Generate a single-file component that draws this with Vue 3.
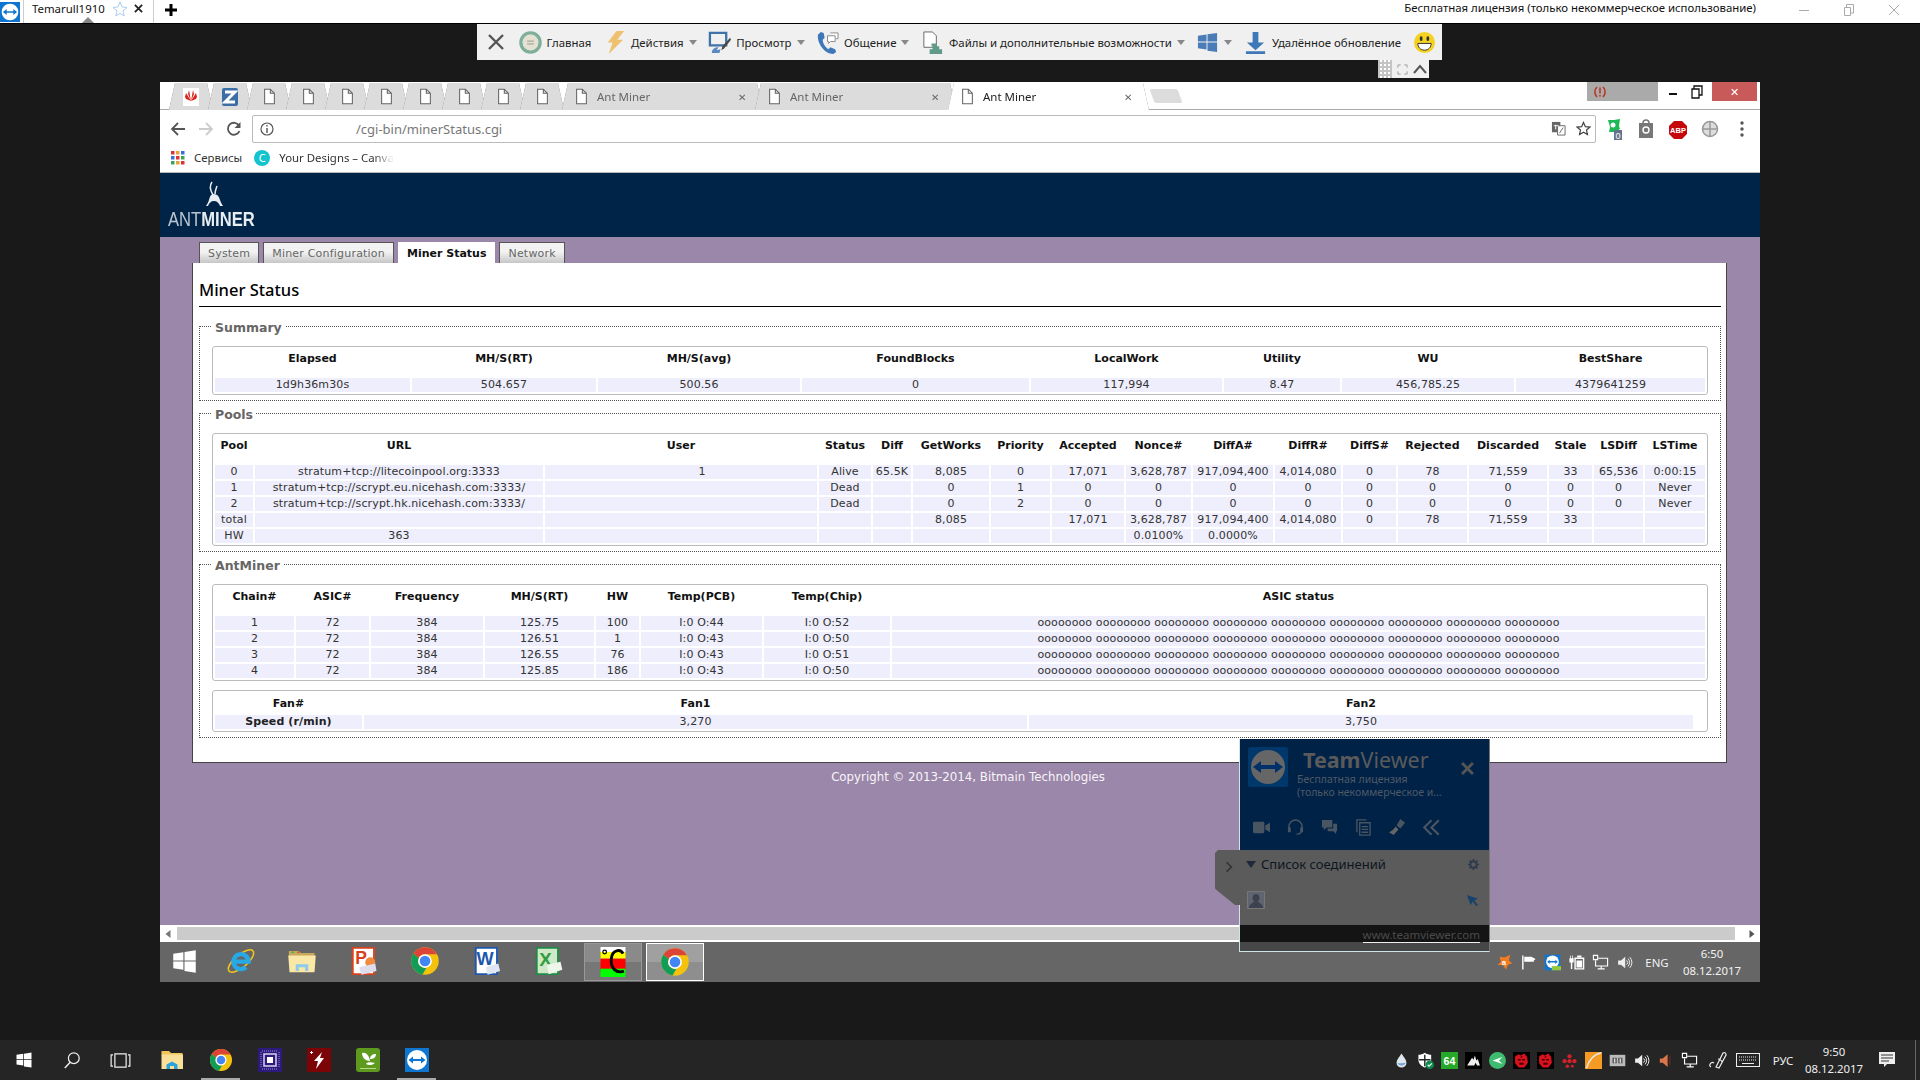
<script setup>
const summaryCols = [195, 184, 202, 227, 191, 116, 172, 189]
const summaryHead = ['Elapsed', 'MH/S(RT)', 'MH/S(avg)', 'FoundBlocks', 'LocalWork', 'Utility', 'WU', 'BestShare']
const summaryRow = ['1d9h36m30s', '504.657', '500.56', '0', '117,994', '8.47', '456,785.25', '4379641259']

const poolCols = [38, 288, 272, 52, 38, 76, 59, 72, 65, 80, 66, 53, 69, 78, 43, 49, 60]
const poolHead = ['Pool', 'URL', 'User', 'Status', 'Diff', 'GetWorks', 'Priority', 'Accepted', 'Nonce#', 'DiffA#', 'DiffR#', 'DiffS#', 'Rejected', 'Discarded', 'Stale', 'LSDiff', 'LSTime']
const poolRows = [
  ['0', 'stratum+tcp://litecoinpool.org:3333', '1', 'Alive', '65.5K', '8,085', '0', '17,071', '3,628,787', '917,094,400', '4,014,080', '0', '78', '71,559', '33', '65,536', '0:00:15'],
  ['1', 'stratum+tcp://scrypt.eu.nicehash.com:3333/', '', 'Dead', '', '0', '1', '0', '0', '0', '0', '0', '0', '0', '0', '0', 'Never'],
  ['2', 'stratum+tcp://scrypt.hk.nicehash.com:3333/', '', 'Dead', '', '0', '2', '0', '0', '0', '0', '0', '0', '0', '0', '0', 'Never'],
  ['total', '', '', '', '', '8,085', '', '17,071', '3,628,787', '917,094,400', '4,014,080', '0', '78', '71,559', '33', '', ''],
  ['HW', '363', '', '', '', '', '', '', '0.0100%', '0.0000%', '', '', '', '', '', '', '']
]

const asicStatus = Array(9).fill('oooooooo').join(' ')
const chainCols = [79, 73, 112, 109, 43, 121, 126, 813]
const chainHead = ['Chain#', 'ASIC#', 'Frequency', 'MH/S(RT)', 'HW', 'Temp(PCB)', 'Temp(Chip)', 'ASIC status']
const chainRows = [
  ['1', '72', '384', '125.75', '100', 'I:0 O:44', 'I:0 O:52', asicStatus],
  ['2', '72', '384', '126.51', '1', 'I:0 O:43', 'I:0 O:50', asicStatus],
  ['3', '72', '384', '126.55', '76', 'I:0 O:43', 'I:0 O:51', asicStatus],
  ['4', '72', '384', '125.85', '186', 'I:0 O:43', 'I:0 O:50', asicStatus]
]

const pinnedDocs = 8
const minerTabs = ['System', 'Miner Configuration', 'Miner Status', 'Network']
const remoteTools = [
  { icon: 'home', label: 'Главная' },
  { icon: 'bolt', label: 'Действия', caret: true },
  { icon: 'monitor', label: 'Просмотр', caret: true },
  { icon: 'phone', label: 'Общение', caret: true },
  { icon: 'files', label: 'Файлы и дополнительные возможности', caret: true },
  { icon: 'winblue', label: '', caret: true },
  { icon: 'download', label: 'Удалённое обновление' },
  { icon: 'smile', label: '' }
]
const innerApps = ['ie', 'folder', 'ppt', 'chrome', 'word', 'excel']
const innerTray = ['avast', 'flag', 'tvtray', 'battery', 'net', 'speaker']
const outerApps = ['folder2', 'chrome', 'cpuz', 'flash', 'splash', 'tv']
const outerTray = ['drop', 'shield', 'aida', 'corsair', 'send', 'devil', 'devil', 'dots', 'curve', 'grayb', 'speaker', 'mute', 'net']
const tvTools = ['video', 'headset', 'chat', 'tvdoc', 'brush', 'back']
</script>

<template>
  <div class="screen">
    <!-- symbols used by the taskbars and toolbars -->
    <svg class="defs" width="0" height="0">
      <defs>
        <symbol id="win" viewBox="0 0 24 24"><path fill="currentColor" d="M2 5l9-1.300V11H2zM12 3.500l10-1.500V11H12zM2 12h9v7.400L2 18zM12 12h10v10l-10-1.500z"/></symbol>
        <symbol id="winblue" viewBox="0 0 24 24"><path fill="#4a7cb8" d="M2 5l9-1.300V11H2zM12 3.500l10-1.500V11H12zM2 12h9v7.400L2 18zM12 12h10v10l-10-1.500z"/></symbol>
        <symbol id="chrome" viewBox="0 0 48 48">
          <circle cx="24" cy="24" r="22" fill="#f4c20d"/>
          <path fill="#db4437" d="M24 2a22 22 0 0 1 19 11H24a11 11 0 0 0-10 6.500L5.500 12A22 22 0 0 1 24 2z"/>
          <path fill="#0f9d58" d="M5.500 12L14 19.500A11 11 0 0 0 26 35L20 45.700A22 22 0 0 1 5.500 12z"/>
          <circle cx="24" cy="24" r="11" fill="#fff"/><circle cx="24" cy="24" r="8.500" fill="#4285f4"/>
        </symbol>
        <symbol id="ie" viewBox="0 0 48 48">
          <ellipse cx="24" cy="24" rx="25" ry="10" transform="rotate(-40 24 24)" fill="none" stroke="#f3c51f" stroke-width="2.500"/>
          <path fill="none" stroke="#26a9e6" stroke-width="7" d="M12 25h24a12 12 0 1 0-4 9"/>
        </symbol>
        <symbol id="folder" viewBox="0 0 48 48">
          <path fill="#c9a75b" d="M3 8h16l3 3h22v6H3z"/><path fill="#fbe7a6" d="M2 15h44l-2 27H4z"/>
          <path fill="#8ccbee" d="M14 40V29h20v11h-5v-6H19v6z"/><path fill="#c53" d="M16 9h4v2h-4z"/><path fill="#2b5" d="M7 9h4v2H7z"/>
        </symbol>
        <symbol id="folder2" viewBox="0 0 48 48">
          <path fill="#f2c55c" d="M3 6h15l4 4h23v4H3z"/><path fill="#fbe09a" d="M3 13h43v29H3z"/>
          <path fill="#2aa4dc" d="M13 42V33l11-6 11 6v9h-7v-6h-8v6z"/>
        </symbol>
        <symbol id="ppt" viewBox="0 0 48 48">
          <path fill="#fff" d="M5 2h36v44H5z"/><path fill="none" stroke="#d8411b" stroke-width="3" d="M6 3h34v42H6z"/>
          <text x="10" y="28" font-family="Liberation Sans" font-weight="700" font-size="28" fill="#d8411b">P</text>
          <circle cx="34" cy="26" r="8" fill="#f08a3c"/><path fill="#dde" d="M16 34l26-6 2 12-24 6z"/>
        </symbol>
        <symbol id="word" viewBox="0 0 48 48">
          <path fill="#fff" d="M5 2h36v44H5z"/><path fill="none" stroke="#1d57ad" stroke-width="3" d="M6 3h34v42H6z"/>
          <text x="7" y="30" font-family="Liberation Sans" font-weight="700" font-size="29" fill="#1d57ad">W</text>
          <path fill="#dde6f2" d="M22 34l20-6 3 12-20 6z"/>
        </symbol>
        <symbol id="excel" viewBox="0 0 48 48">
          <path fill="#cfe8c8" d="M5 2h36v44H5z"/><path fill="none" stroke="#1f8a45" stroke-width="3" d="M6 3h34v42H6z"/>
          <text x="10" y="32" font-family="Liberation Sans" font-weight="700" font-size="30" fill="#2f9e3f">X</text>
          <path fill="#eef5ea" d="M22 30l22-5 3 13-22 7z"/>
        </symbol>
        <symbol id="temp" viewBox="0 0 30 36">
          <path fill="#fff" d="M0 0h30v6H0z"/><path fill="#fbff00" d="M0 6h30v8H0z"/><path fill="#f00" d="M0 14h30v14H0z"/><path fill="#0f0" d="M0 26h30v10H0z"/>
          <path fill="none" stroke="#000" stroke-width="3.500" d="M27 8c-3-6-13-5-14 6-1 12 6 18 15 15"/>
          <circle cx="5" cy="6" r="2.200" fill="none" stroke="#000" stroke-width="1.500"/>
        </symbol>
        <symbol id="cpuz" viewBox="0 0 24 24">
          <path fill="#2d1a7d" d="M0 0h24v24H0z"/><rect x="6" y="6" width="12" height="12" fill="none" stroke="#cfc8ea" stroke-width="1.600"/>
          <path stroke="#9d92d2" stroke-dasharray="1 1" fill="none" d="M3 4v16M21 4v16M4 3h16M4 21h16"/><rect x="9" y="9" width="6" height="6" fill="#fff"/>
        </symbol>
        <symbol id="flash" viewBox="0 0 24 24"><path fill="#7c0407" d="M0 0h24v24H0z"/><path fill="#fff" d="M15 4L7 13h4l-2 8 8-11h-4zM4 3h1v1h1v1H5v1H4V5H3V4h1z"/></symbol>
        <symbol id="splash" viewBox="0 0 24 24"><rect width="24" height="24" rx="3" fill="#5d9a1e"/><path fill="#fff" d="M6 5c4-1 7 2 8 8-4 0-8-3-8-8zm8 6c0-3 2-5 6-5 0 3-2 5-6 5zm-4 5c1-2 5-2 9-1-2 2-6 3-9 1z"/><path fill="#b5d78a" d="M4 20h16v1H4z"/></symbol>
        <symbol id="tv" viewBox="0 0 24 24"><path fill="#0e76d1" d="M0 0h24v24H0z"/><circle cx="12" cy="12" r="10" fill="#fff"/><path fill="#0e76d1" d="M3.500 12L8 8.500V11h8V8.500l4.500 3.500L16 15.500V13H8v2.500z"/></symbol>
        <symbol id="tvtray" viewBox="0 0 24 24"><path fill="#0e76d1" d="M1 1h22v22H1z"/><circle cx="12" cy="11" r="9" fill="#fff"/><path fill="#0e76d1" d="M4.500 11L8 8v2h8V8l3.500 3L16 14v-2H8v2z"/><path fill="#96c93d" d="M11 17h13v6H11z"/></symbol>
        <symbol id="avast" viewBox="0 0 24 24"><path fill="#f47c20" d="M12 5l8-4-2 8 5 4-6 2-3 7-4-6-8-1 5-4-2-7z"/><text x="8" y="16" font-family="Liberation Sans" font-size="11" font-weight="700" fill="#fff">a</text></symbol>
        <symbol id="flag" viewBox="0 0 24 24"><path fill="#fff" d="M3 2h2v20H3zM6 4h10l6 3-3 3 1 1H6z"/></symbol>
        <symbol id="battery" viewBox="0 0 24 24"><path fill="none" stroke="#fff" stroke-width="2" d="M10 6h12v15H10z"/><path fill="#fff" d="M13 2h6v3h-6zM12 9h8v10h-8zM3 2h1v4H3zM6 2h1v4H6zM2 6h6v6H6v9H4v-9H2z"/></symbol>
        <symbol id="net" viewBox="0 0 24 24"><path fill="none" stroke="#fff" stroke-width="1.600" d="M2 2h6v6H2zM9 6h13v11H5V9M13 17v4M8 21h10"/></symbol>
        <symbol id="speaker" viewBox="0 0 24 24"><path fill="#eee" d="M3 9h4l6-5v16l-6-5H3z"/><path fill="none" stroke="#eee" stroke-width="1.400" d="M15 9a4 4 0 0 1 0 6M17 6.500a8 8 0 0 1 0 11M19.500 4.500a11 11 0 0 1 0 15"/></symbol>
        <symbol id="mute" viewBox="0 0 24 24"><path fill="#d9774a" d="M4 9h4l7-6v18l-7-6H4z"/><path fill="#5a2b1c" d="M17 6h2v12h-2z"/></symbol>
        <symbol id="drop" viewBox="0 0 24 24"><path fill="#dfe6ee" d="M12 2c3 5 7 9 7 13a7 7 0 0 1-14 0c0-4 4-8 7-13z"/><path fill="#7aa8d4" d="M6 15c4 2 8 0 12 0a6.500 6.500 0 0 1-12 0z"/></symbol>
        <symbol id="shield" viewBox="0 0 24 24"><path fill="#fff" d="M11 1c3 2 6 3 9 3v7c0 5-4 9-9 11-5-2-9-6-9-11V4c3 0 6-1 9-3z"/><path fill="#252525" d="M10 4h2v16h-2zM3 10h16v2H3z"/><circle cx="18" cy="18" r="6" fill="#0e8a4a"/><path fill="none" stroke="#fff" stroke-width="1.500" d="M15 18l2 2 4-4"/></symbol>
        <symbol id="aida" viewBox="0 0 24 24"><path fill="#26a828" d="M0 0h24v24H0z"/><text x="12" y="18" text-anchor="middle" font-family="Liberation Sans" font-size="15" font-weight="700" fill="#fff">64</text></symbol>
        <symbol id="corsair" viewBox="0 0 24 24"><path fill="#000" d="M0 0h24v24H0z"/><path fill="#eee" d="M3 19L10 8l2 3 2-6 2 7 2-2 3 9H17l-2-4-2 4z"/></symbol>
        <symbol id="send" viewBox="0 0 24 24"><circle cx="12" cy="12" r="12" fill="#3fbc6f"/><path fill="#fff" d="M5 12l14-5-5 5 5 5z"/></symbol>
        <symbol id="devil" viewBox="0 0 24 24"><path fill="#000" d="M0 0h24v24H0z"/><path fill="#d7121c" d="M3 6l5-3 3 2 5-3 4 5 1 8-5 7H8l-5-6z"/><path fill="#400" d="M7 10h4v2H7zM13 10h4v2h-4zM9 15h6v3H9zM11 6h2v2h-2z"/></symbol>
        <symbol id="dots" viewBox="0 0 24 24"><g fill="#d4202a"><circle cx="12" cy="6" r="3"/><circle cx="5" cy="13" r="3"/><circle cx="12" cy="13" r="3"/><circle cx="19" cy="13" r="3"/><circle cx="9" cy="20" r="2.500"/><circle cx="16" cy="20" r="2"/></g></symbol>
        <symbol id="curve" viewBox="0 0 24 24"><path fill="#f59a23" d="M0 0h24v24H0z"/><path fill="none" stroke="#e8e8e8" stroke-width="2" d="M2 23C6 10 12 3 23 1"/></symbol>
        <symbol id="grayb" viewBox="0 0 24 24"><rect x="1" y="4" width="22" height="16" fill="#bbb"/><path fill="#555" d="M5 8h6v8H5zM13 8h6v8h-6z"/><path fill="#ddd" d="M7 9h2v6H7zM15 9h2v6h-2z"/></symbol>
        <symbol id="home" viewBox="0 0 24 24"><circle cx="12" cy="12" r="10" fill="none" stroke="#7fae9a" stroke-width="3.500"/><circle cx="12" cy="12" r="8" fill="#e4e0d2"/><path stroke="#9a9a8c" d="M8.500 10.500h7M8.500 13.500h7"/></symbol>
        <symbol id="bolt" viewBox="0 0 24 24"><path fill="#efc06f" d="M14 0h8l-7 9h6L6 24l4-12H5z"/></symbol>
        <symbol id="monitor" viewBox="0 0 24 24"><path fill="none" stroke="#3f72a9" stroke-width="2.400" d="M2 2h17v13H2z"/><path fill="#5a88bd" d="M4 23c0-4 3-6 7-6l-2 3 4-1-1 4z"/><path fill="#4a4a4a" d="M23 7l1 2-7 9-3 2 1-4z"/></symbol>
        <symbol id="phone" viewBox="0 0 24 24"><path fill="#3e78b8" d="M5 1l3 1 1 5-2 2c0 4 3 8 6 10l2-2 5 2 1 3-3 2C9 24 1 13 2 4z"/><path fill="#fff" stroke="#888" d="M12 5h8v6h-5l-2 2v-2h-1zM15 2h8v6h-2"/></symbol>
        <symbol id="files" viewBox="0 0 24 24"><path fill="#fff" stroke="#666" d="M3 1h9l4 4v12H3z"/><path fill="#5f9a8a" d="M11 13h5v3h3v3h3v5H9v-5h3v-3h-1z"/></symbol>
        <symbol id="download" viewBox="0 0 24 24"><path fill="#3e78b8" d="M9 1h6v11h6l-9 8-9-8h6zM2 21h20v3H2z"/></symbol>
        <symbol id="smile" viewBox="0 0 24 24"><circle cx="12" cy="12" r="11" fill="#f4d21f"/><ellipse cx="8.500" cy="8" rx="1.500" ry="2.500" fill="#333"/><ellipse cx="15.500" cy="8" rx="1.500" ry="2.500" fill="#333"/><path fill="#fff" stroke="#333" d="M5 13h14c0 4-3 7-7 7s-7-3-7-7z"/></symbol>
        <symbol id="doc" viewBox="0 0 16 20"><path fill="#fff" stroke="#666" stroke-width="1.300" d="M2 1h7l5 5v13H2zM9 1v5h5"/></symbol>
        <symbol id="video" viewBox="0 0 18 14"><rect y="1" width="12" height="12" rx="1.500" fill="#4a5562"/><path fill="#4a5562" d="M13 5l5-3v10l-5-3z"/></symbol>
        <symbol id="headset" viewBox="0 0 18 18"><path fill="none" stroke="#4a5562" stroke-width="1.500" d="M2 10V8a7 7 0 0 1 14 0v2M15 13c0 2-2 3-5 3"/><rect x="1" y="9" width="3" height="5" fill="#4a5562"/><rect x="14" y="9" width="3" height="5" fill="#4a5562"/></symbol>
        <symbol id="chat" viewBox="0 0 18 18"><path fill="#4a5562" d="M1 1h11v8H6l-3 3V9H1zM13 5h4v8h-1v3l-3-3H7v-3h6z"/></symbol>
        <symbol id="tvdoc" viewBox="0 0 16 18"><path fill="none" stroke="#4a5562" stroke-width="1.400" d="M1 14V1h10M4 17V4h11v13zM6 8h7M6 11h7M6 14h7"/></symbol>
        <symbol id="brush" viewBox="0 0 18 18"><path fill="#4a5562" d="M12 0l5 4-5 6-4-3z"/><path fill="#666" d="M7 8l3 3-5 6-5-3c3-1 5-3 7-6z"/></symbol>
        <symbol id="back" viewBox="0 0 14 14"><path fill="none" stroke="#4a5562" stroke-width="1.800" d="M7 1L1 7l6 6M13 1L7 7l6 6"/></symbol>
        <symbol id="gear" viewBox="0 0 14 14"><circle cx="7" cy="7" r="4" fill="none" stroke="#2c3a4c" stroke-width="2.400"/><path stroke="#2c3a4c" stroke-width="2" d="M7 0v3M7 11v3M0 7h3M11 7h3M2 2l2 2M10 10l2 2M12 2l-2 2M4 10l-2 2"/></symbol>
      </defs>
    </svg>

    <header class="session-bar">
      <svg class="session-logo"><use href="#tv"/></svg>
      <div class="session-tab">
        <span class="session-name">Temarull1910</span>
        <svg class="session-star" viewBox="0 0 16 16"><path fill="none" stroke="#a9cdf0" d="M8 1l2 5 5 .5-4 3.500 1.200 5L8 12.300 3.800 15 5 10 1 6.500 6 6z"/></svg>
        <svg class="session-x" viewBox="0 0 10 10"><path stroke="#222" stroke-width="2" d="M1 1l8 8M9 1l-8 8"/></svg>
        <i class="session-pointer"></i>
      </div>
      <svg class="session-plus" viewBox="0 0 12 12"><path stroke="#000" stroke-width="3" d="M6 0v12M0 6h12"/></svg>
      <span class="session-license">Бесплатная лицензия (только некоммерческое использование)</span>
      <div class="session-controls">
        <svg viewBox="0 0 12 12"><path stroke="#aaa" d="M1 6.500h10"/></svg>
        <svg viewBox="0 0 12 12"><path fill="none" stroke="#aaa" d="M1.500 3.500h6v8h-6zM3.500 3V.5h7V9H8"/></svg>
        <svg viewBox="0 0 12 12"><path stroke="#aaa" d="M1 1l10 10M11 1L1 11"/></svg>
      </div>
    </header>

    <main class="desktop">
      <!-- панель удалённого управления -->
      <div class="remote-bar">
        <svg class="remote-close" viewBox="0 0 18 18"><path stroke="#555" stroke-width="2.400" d="M2 2l14 14M16 2L2 16"/></svg>
        <div v-for="tool in remoteTools" :key="tool.icon" class="remote-tool">
          <svg class="remote-icon"><use :href="'#' + tool.icon"/></svg>
          <span v-if="tool.label">{{ tool.label }}</span>
          <i v-if="tool.caret" class="caret"></i>
        </div>
      </div>
      <div class="remote-handle">
        <span class="handle-grip"></span>
        <svg viewBox="0 0 12 12"><path fill="none" stroke="#999" d="M1 4V1h3M8 1h3v3M11 8v3H8M4 11H1V8"/></svg>
        <svg viewBox="0 0 14 12"><path fill="none" stroke="#555" stroke-width="2" d="M1 10l6-7 6 7"/></svg>
      </div>

      <section class="browser">
        <div class="tab-strip">
          <div class="chrome-tab pinned"><div class="tab-shape"><svg viewBox="0 0 16 18" class="favicon"><path fill="#fff" d="M0 0h16v18H0z"/><path fill="#d9251d" d="M8 13L3 5l-1 4 1 2zM8 13l5-8 1 4-1 2zM8 13L6 2 5 6zM8 13l2-11 1 4z"/></svg></div></div>
          <div class="chrome-tab pinned"><div class="tab-shape"><svg viewBox="0 0 16 18" class="favicon"><rect width="16" height="18" rx="2" fill="#3a6ea5"/><path fill="none" stroke="#fff" stroke-width="3" d="M3 4h10L3 14h10"/></svg></div></div>
          <div v-for="n in pinnedDocs" :key="n" class="chrome-tab pinned"><div class="tab-shape"><svg class="favicon doc"><use href="#doc"/></svg></div></div>
          <div class="chrome-tab wide first-wide"><div class="tab-shape"><svg class="favicon doc"><use href="#doc"/></svg><span class="tab-title">Ant Miner</span><span class="tab-x">✕</span></div></div>
          <div class="chrome-tab wide"><div class="tab-shape"><svg class="favicon doc"><use href="#doc"/></svg><span class="tab-title">Ant Miner</span><span class="tab-x">✕</span></div></div>
          <div class="chrome-tab wide active"><div class="tab-shape"><svg class="favicon doc"><use href="#doc"/></svg><span class="tab-title">Ant Miner</span><span class="tab-x">✕</span></div></div>
          <span class="new-tab"></span>
          <div class="window-buttons">
            <span class="alert-box">
              <svg viewBox="0 0 14 14" width="14" height="14"><path fill="none" stroke="#b9372c" stroke-width="1.600" d="M4 2a7 7 0 0 0 0 10M10 2a7 7 0 0 1 0 10M7 2.500v6M7 10v1.500"/></svg>
            </span>
            <svg class="win-min" viewBox="0 0 10 10"><path stroke="#111" stroke-width="2" d="M1 7h8"/></svg>
            <svg class="win-max" viewBox="0 0 12 14"><path fill="none" stroke="#111" stroke-width="1.300" d="M1 4h7v9H1zM3 4V1h8v9H8"/></svg>
            <span class="win-close">✕</span>
          </div>
        </div>

        <div class="nav-row">
          <svg class="nav-ic" viewBox="0 0 16 16"><path fill="none" stroke="#555" stroke-width="1.800" d="M15 8H2M8 2L2 8l6 6"/></svg>
          <svg class="nav-ic" viewBox="0 0 16 16"><path fill="none" stroke="#ccc" stroke-width="1.800" d="M1 8h13M8 2l6 6-6 6"/></svg>
          <svg class="nav-ic" viewBox="0 0 16 16"><path fill="none" stroke="#555" stroke-width="1.800" d="M13.500 10A6 6 0 1 1 13 4.500"/><path fill="#555" d="M14.500 1v6h-6z"/></svg>
          <div class="omnibox">
            <svg class="info-ic" viewBox="0 0 14 14"><circle cx="7" cy="7" r="6" fill="none" stroke="#555" stroke-width="1.200"/><path stroke="#555" stroke-width="1.400" d="M7 6v5M7 3v1.600"/></svg>
            <span class="url">/cgi-bin/minerStatus.cgi</span>
            <svg class="omni-ic" viewBox="0 0 16 16"><path fill="#666" d="M1 1h9v11H1z"/><path fill="#fff" stroke="#666" d="M7 5h8v10H7z"/><path stroke="#fff" d="M3 5h5M5 4v5"/><path stroke="#666" d="M9 13l4-6"/></svg>
            <svg class="omni-ic" viewBox="0 0 16 16"><path fill="none" stroke="#444" stroke-width="1.300" d="M8 1.500l2 4.500 4.800.5-3.600 3.200 1 4.800L8 12l-4.200 2.500 1-4.800L1.200 6.500 6 6z"/></svg>
          </div>
          <div class="ext-row">
            <svg viewBox="0 0 18 22"><path fill="#1cb954" d="M3 2h6l6-1-1 7 1 3-5 3-6 0 1-5z"/><circle cx="8" cy="7" r="2.500" fill="#fff"/><path fill="#66728a" d="M9 12h8v10H9z"/><text x="13" y="20.500" font-size="9" text-anchor="middle" fill="#fff" font-family="Liberation Sans">0</text></svg>
            <svg viewBox="0 0 18 22"><path fill="#777" d="M2 5h14v15H2z"/><path fill="none" stroke="#777" stroke-width="1.500" d="M6 5c0-4 6-4 6 0"/><circle cx="9" cy="12" r="3" fill="none" stroke="#fff" stroke-width="1.400"/></svg>
            <svg viewBox="0 0 18 22"><path fill="#c5070c" d="M5 3h8l5 5v8l-5 5H5l-5-5V8z"/><text x="9" y="15" font-size="7.500" font-weight="700" text-anchor="middle" fill="#fff" font-family="Liberation Sans">ABP</text></svg>
            <svg viewBox="0 0 18 22"><circle cx="9" cy="11" r="7.500" fill="#ddd" stroke="#999" stroke-width="1.500"/><path stroke="#999" stroke-width="1.500" d="M9 3v16M2 11h14"/></svg>
            <svg viewBox="0 0 18 22"><g fill="#555"><circle cx="9" cy="5" r="1.700"/><circle cx="9" cy="11" r="1.700"/><circle cx="9" cy="17" r="1.700"/></g></svg>
          </div>
        </div>

        <div class="bookmarks">
          <svg class="apps-ic" viewBox="0 0 14 14">
            <path fill="#d33" d="M0 0h3.500v3.500H0z"/><path fill="#e8a13a" d="M5 0h3.500v3.500H5z"/><path fill="#3a6fd8" d="M10 0h3.500v3.500H10z"/>
            <path fill="#3a6fd8" d="M0 5h3.500v3.500H0z"/><path fill="#d33" d="M5 5h3.500v3.500H5z"/><path fill="#3aa655" d="M10 5h3.500v3.500H10z"/>
            <path fill="#3aa655" d="M0 10h3.500v3.500H0z"/><path fill="#e8a13a" d="M5 10h3.500v3.500H5z"/><path fill="#d33" d="M10 10h3.500v3.500H10z"/>
          </svg>
          <span class="bm-text">Сервисы</span>
          <span class="canva-ic">C</span>
          <span class="bm-text bm-fade">Your Designs – Canva</span>
        </div>

        <div class="page">
          <div class="miner-head">
            <div class="logo">
              <svg class="ant" viewBox="0 0 24 30"><path fill="none" stroke="#e8edf2" stroke-width="1.500" d="M9 1c-3 4-2 8 1 13M14 5c-1 3-2 5-2 8"/><path fill="#e8edf2" d="M11 13c3 0 5 2 6 6 1 3 2 4 3 6h-3c-1-3-3-5-6-5s-5 2-6 5H3c1-2 2-3 3-6 1-4 2-6 5-6z"/></svg>
              <div class="logo-word"><span class="ant-light">ANT</span><b>MINER</b></div>
            </div>
          </div>

          <div class="miner-body">
            <nav class="miner-tabs">
              <span v-for="t in minerTabs" :key="t" class="miner-tab" :class="{ current: t === 'Miner Status' }">{{ t }}</span>
            </nav>
            <div class="panel">
              <h2 class="panel-title">Miner Status</h2>

              <fieldset class="group">
                <legend>Summary</legend>
                <div class="tbl-wrap">
                  <table class="tbl">
                    <colgroup><col v-for="(w, i) in summaryCols" :key="i" :style="{ width: w + 'px' }"></colgroup>
                    <thead><tr><th v-for="h in summaryHead" :key="h">{{ h }}</th></tr></thead>
                    <tbody><tr><td v-for="(c, i) in summaryRow" :key="i">{{ c }}</td></tr></tbody>
                  </table>
                </div>
              </fieldset>

              <fieldset class="group">
                <legend>Pools</legend>
                <div class="tbl-wrap">
                  <table class="tbl">
                    <colgroup><col v-for="(w, i) in poolCols" :key="i" :style="{ width: w + 'px' }"></colgroup>
                    <thead><tr><th v-for="h in poolHead" :key="h">{{ h }}</th></tr></thead>
                    <tbody>
                      <tr v-for="(row, r) in poolRows" :key="r">
                        <td v-for="(c, i) in row" :key="i" :class="{ 'user-cell': i === 2 }">{{ c }}</td>
                      </tr>
                    </tbody>
                  </table>
                </div>
              </fieldset>

              <fieldset class="group">
                <legend>AntMiner</legend>
                <div class="tbl-wrap">
                  <table class="tbl">
                    <colgroup><col v-for="(w, i) in chainCols" :key="i" :style="{ width: w + 'px' }"></colgroup>
                    <thead><tr><th v-for="h in chainHead" :key="h">{{ h }}</th></tr></thead>
                    <tbody>
                      <tr v-for="(row, r) in chainRows" :key="r">
                        <td v-for="(c, i) in row" :key="i">{{ c }}</td>
                      </tr>
                    </tbody>
                  </table>
                </div>
                <div class="tbl-wrap fan-wrap">
                  <table class="tbl fan">
                    <colgroup><col class="fan-a"><col class="fan-b"><col class="fan-c"><col class="fan-d"></colgroup>
                    <thead><tr><th>Fan#</th><th>Fan1</th><th>Fan2</th><th></th></tr></thead>
                    <tbody><tr><td class="speed">Speed (r/min)</td><td>3,270</td><td>3,750</td><td class="blank"></td></tr></tbody>
                  </table>
                </div>
              </fieldset>
            </div>
            <p class="copyright">Copyright © 2013-2014, Bitmain Technologies</p>
          </div>
        </div>

        <div class="h-scroll">
          <svg class="scroll-arrow" viewBox="0 0 8 10"><path fill="#777" d="M6 1v8L1 5z"/></svg>
          <span class="scroll-thumb"></span>
          <svg class="scroll-arrow" viewBox="0 0 8 10"><path fill="#555" d="M2 1v8l5-4z"/></svg>
        </div>

        <footer class="inner-task">
          <svg class="inner-start"><use href="#win"/></svg>
          <span v-for="a in innerApps" :key="a" class="inner-slot"><svg><use :href="'#' + a"/></svg></span>
          <span class="inner-running first-run"><svg class="temp-ic"><use href="#temp"/></svg></span>
          <span class="inner-running on"><svg><use href="#chrome"/></svg></span>
          <div class="inner-tray">
            <span v-for="t in innerTray" :key="t" class="tray-slot"><svg><use :href="'#' + t"/></svg></span>
            <span class="lang">ENG</span>
            <span class="clock"><span>6:50</span><span>08.12.2017</span></span>
          </div>
        </footer>
      </section>

      <!-- окно TeamViewer поверх браузера -->
      <aside class="tv-panel">
        <span class="tv-side"><svg viewBox="0 0 10 14" width="8" height="12"><path fill="none" stroke="#333" stroke-width="2" d="M2 1l6 6-6 6"/></svg></span>
        <div class="tv-head">
          <div class="tv-brand">
            <span class="tv-logo">
              <svg viewBox="0 0 36 36" width="36" height="36"><circle cx="18" cy="18" r="17" fill="#666"/><path fill="#00316a" d="M3 18l8-6v4h14v-4l8 6-8 6v-4H11v4z"/></svg>
            </span>
            <div class="tv-info">
              <div class="tv-name"><b>Team</b>Viewer</div>
              <div class="tv-lic">Бесплатная лицензия<br>(только некоммерческое и...</div>
            </div>
            <svg class="tv-close" viewBox="0 0 12 12"><path stroke="#555" stroke-width="2.600" d="M1 1l10 10M11 1L1 11"/></svg>
          </div>
          <div class="tv-tools">
            <svg v-for="t in tvTools" :key="t"><use :href="'#' + t"/></svg>
          </div>
        </div>
        <div class="tv-list">
          <div class="tv-list-head">
            <i class="tv-tri"></i><span>Список соединений</span>
            <svg class="tv-gear"><use href="#gear"/></svg>
          </div>
          <div class="tv-contact">
            <svg viewBox="0 0 18 18" width="18" height="18"><path fill="#5f6470" stroke="#777" d="M.5.500h17v17H.5z"/><path fill="#3c4250" d="M9 3c3 0 4 3 3 6l-1 2c2 1 4 2 5 5v1H2v-1c1-3 3-4 5-5L6 9c-1-3 0-6 3-6z"/></svg>
            <svg class="tv-cursor" viewBox="0 0 14 14" width="13" height="13"><path fill="#17426e" d="M1 1l12 4-4 2 4 5-2 1-4-5-2 4z"/></svg>
          </div>
        </div>
        <div class="tv-foot"><span>www.teamviewer.com</span></div>
        <div class="tv-rest"></div>
      </aside>
    </main>

    <footer class="taskbar">
      <span class="task-btn"><svg class="start-ic"><use href="#win"/></svg></span>
      <span class="task-btn">
        <svg viewBox="0 0 20 20" width="18" height="18"><circle cx="12" cy="8" r="6" fill="none" stroke="#eee" stroke-width="1.400"/><path stroke="#eee" stroke-width="1.600" d="M8 12.500L2 19"/></svg>
      </span>
      <span class="task-btn">
        <svg viewBox="0 0 22 16" width="21" height="15"><path fill="none" stroke="#eee" stroke-width="1.300" d="M5 1h12v14H5zM3 2H1v12h2M19 2h2v12h-2"/></svg>
      </span>
      <span v-for="a in outerApps" :key="a" class="app-btn" :class="{ running: a === 'chrome' || a === 'tv' }"><svg><use :href="'#' + a"/></svg></span>
      <div class="tray">
        <span v-for="(t, i) in outerTray" :key="i" class="tray-slot big"><svg><use :href="'#' + t"/></svg></span>
        <span class="tray-pen"><svg viewBox="0 0 20 20" width="20" height="20"><path fill="none" stroke="#eee" stroke-width="1.200" d="M3 17c-3-1 0-6 3-4M8 17L15 3c2-1 3 0 3 2L11 18zM10 9c2 0 4 2 4 3"/></svg></span>
        <span class="tray-kbd"><svg viewBox="0 0 24 14" width="24" height="14"><rect x=".5" y=".5" width="23" height="13" fill="none" stroke="#eee"/><path stroke="#eee" stroke-dasharray="1 1" d="M3 4h18M3 7h18"/><path stroke="#eee" d="M6 10.500h12"/></svg></span>
        <span class="lang outer-lang">РУС</span>
        <span class="clock outer-clock"><span>9:50</span><span>08.12.2017</span></span>
        <span class="notify"><svg viewBox="0 0 18 18" width="18" height="18"><path fill="#eee" d="M1 1h16v12H9l-3 3v-3H1z"/><path stroke="#333" d="M3 4h12M3 7h12M3 10h8"/></svg></span>
        <i class="show-desktop"></i>
      </div>
    </footer>
  </div>
</template>

<style>
html, body { margin: 0; background: #191919; }
</style>

<style scoped>
.screen {
  width: 1920px;
  height: 1080px;
  display: flex;
  flex-direction: column;
  overflow: hidden;
  font-family: "Noto Sans", "Open Sans", sans-serif;
  background: #191919;
}
.defs { position: absolute; }

/* верхняя полоса TeamViewer */
.session-bar {
  height: 24px;
  box-sizing: border-box;
  flex: none;
  display: flex;
  align-items: center;
  background: #fff;
  border-bottom: 1px solid #000;
  font-size: 11.4px;
  color: #111;
}
.session-logo { width: 20px; height: 20px; margin-right: 3px; }
.session-tab {
  width: 131px;
  height: 23px;
  display: flex;
  align-items: center;
  position: relative;
  box-sizing: border-box;
  border-left: 1px solid #ccc;
  border-right: 1px solid #ccc;
  padding: 0 0 6px 8px;
}
.session-name { width: 80px; white-space: nowrap; }
.session-star { width: 16px; height: 16px; margin-right: 6px; }
.session-x { width: 9px; height: 9px; }
.session-pointer {
  position: absolute;
  left: 58px;
  bottom: 0;
  border: 6px solid transparent;
  border-top: 0;
  border-bottom-color: #888;
}
.session-plus { width: 12px; height: 12px; margin: -4px 0 0 11px; }
.session-license { margin: -9px 19px 0 auto; white-space: nowrap; }
.session-controls { display: flex; gap: 33px; width: 145px; padding: 0 0 3px 23px; box-sizing: border-box; }
.session-controls svg { width: 12px; height: 12px; }

.desktop { flex: 1; position: relative; background: #191919; }

/* панель сессии */
.remote-bar {
  position: absolute;
  left: 477px;
  top: 0;
  width: 965px;
  height: 36px;
  box-sizing: border-box;
  padding-left: 10px;
  display: flex;
  align-items: center;
  gap: 11.6px;
  background: #f0f0f0;
  font-size: 11.4px;
  color: #222;
}
.remote-close { width: 18px; height: 18px; margin-right: 2px; flex: none; }
.remote-tool { display: flex; align-items: center; gap: 5px; white-space: nowrap; flex: none; }
.remote-icon { width: 23px; height: 23px; flex: none; }
.caret {
  border: 4.5px solid transparent;
  border-top: 5px solid #888;
  border-bottom: 0;
}
.remote-handle {
  position: absolute;
  left: 1378px;
  top: 36px;
  width: 51px;
  height: 18px;
  display: flex;
  align-items: center;
  gap: 5px;
  background: #f0f0f0;
}
.handle-grip {
  width: 14px;
  height: 18px;
  background: conic-gradient(#fff 25%, #c4c4c4 0) 0 0 / 4px 4px;
}
.remote-handle svg { width: 11px; height: 11px; }
.remote-handle svg:last-child { width: 14px; height: 12px; }

/* окно браузера */
.browser {
  position: absolute;
  left: 160px;
  top: 58px;
  width: 1600px;
  height: 900px;
  display: flex;
  flex-direction: column;
  background: #fff;
  color: #333;
}
.tab-strip {
  height: 28px;
  flex: none;
  display: flex;
  align-items: flex-end;
  padding-left: 9px;
  box-sizing: border-box;
  border-bottom: 1px solid #aaa;
}
.chrome-tab {
  height: 27px;
  margin-bottom: -1px;
  filter: drop-shadow(0 0 .6px #777);
}
.chrome-tab.pinned { width: 44px; margin-right: -5px; }
.chrome-tab.wide { width: 201px; margin-right: -8px; }
.chrome-tab.first-wide { margin-left: 3px; }
.chrome-tab.active { width: 201px; margin-right: -6px; position: relative; }
.tab-shape {
  height: 100%;
  display: flex;
  align-items: center;
  background: #dcdcdc;
  clip-path: polygon(0 100%, 6px 0, calc(100% - 6px) 0, 100% 100%);
}
.active .tab-shape { background: #fff; }
.pinned .tab-shape { justify-content: center; }
.wide .tab-shape { padding: 0 17px 0 13px; font-size: 11.5px; }
.favicon { width: 16px; height: 18px; flex: none; }
.favicon.doc { width: 13px; height: 17px; }
.tab-title { margin-left: 9px; flex: 1; color: #666; }
.active .tab-title { color: #222; }
.tab-x { font-size: 10px; color: #666; }
.new-tab {
  width: 28px;
  height: 14px;
  margin: 0 0 6px 9px;
  background: #dcdcdc;
  transform: skewX(20deg);
  border-radius: 2px;
}
.window-buttons {
  margin-left: auto;
  align-self: flex-start;
  height: 19px;
  display: flex;
  align-items: center;
  margin-right: 3px;
}
.alert-box { width: 71px; height: 19px; background: #aaa; display: flex; align-items: center; padding-left: 6px; box-sizing: border-box; }
.win-min { width: 10px; height: 10px; margin-left: 10px; }
.win-max { width: 12px; height: 14px; margin-left: 13px; }
.win-close {
  width: 45px;
  height: 19px;
  margin-left: 9px;
  background: #c85a5a;
  color: #fff;
  font-size: 11px;
  line-height: 19px;
  text-align: center;
}

.nav-row {
  height: 35px;
  flex: none;
  display: flex;
  align-items: center;
  padding: 2px 0 0 10px;
  box-sizing: border-box;
}
.nav-ic { width: 16px; height: 16px; margin-right: 12px; flex: none; }
.omnibox {
  width: 1344px;
  height: 28px;
  flex: none;
  margin-left: -2px;
  box-sizing: border-box;
  border: 1px solid #bbb;
  border-radius: 2px;
  display: flex;
  align-items: center;
  font-size: 13px;
}
.info-ic { width: 14px; height: 14px; margin-left: 7px; }
.url { margin-left: 82px; flex: 1; color: #777; }
.omni-ic { width: 15px; height: 15px; margin-right: 10px; }
.omni-ic:last-child { margin-right: 4px; }
.ext-row { display: flex; margin-left: 9px; }
.ext-row svg { width: 18px; height: 22px; margin-right: 14px; flex: none; }
.ext-row svg:last-child { margin-right: 0; }

.bookmarks {
  height: 28px;
  flex: none;
  display: flex;
  align-items: center;
  padding: 0 0 2px 11px;
  box-sizing: border-box;
  border-bottom: 1px solid #bbb;
  font-size: 11.4px;
}
.apps-ic { width: 14px; height: 14px; }
.bm-text { color: #333; margin-left: 9px; white-space: nowrap; }
.canva-ic {
  width: 16px;
  height: 16px;
  margin-left: 12px;
  border-radius: 50%;
  background: #13c4cf;
  color: #fff;
  font-size: 11px;
  line-height: 16px;
  text-align: center;
}
.bm-fade {
  -webkit-mask-image: linear-gradient(90deg, #000 82%, transparent);
  mask-image: linear-gradient(90deg, #000 82%, transparent);
}

/* страница antminer */
.page {
  flex: 1;
  display: flex;
  flex-direction: column;
  min-height: 0;
  font-family: "DejaVu Sans", Verdana, sans-serif;
  font-size: 11px;
}
.miner-head { height: 64px; flex: none; background: #002447; }
.logo { width: 100px; padding: 8px 0 0 8px; color: #e8edf2; }
.ant { display: block; width: 24px; height: 30px; margin-left: 35px; }
.logo-word {
  font-family: "Liberation Sans", sans-serif;
  font-size: 20px;
  line-height: 16px;
  white-space: nowrap;
  transform: scaleX(.83);
  transform-origin: left;
}
.ant-light { font-weight: 400; opacity: .8; }
.miner-body { flex: 1; background: #9b87a9; padding-top: 5px; }
.miner-tabs { display: flex; gap: 4px; margin-left: 39px; height: 21px; }
.miner-tab {
  box-sizing: border-box;
  height: 21px;
  padding: 0 8px;
  line-height: 21px;
  letter-spacing: .2px;
  color: #666;
  border: 1px solid #555;
  border-bottom: 0;
  background: linear-gradient(#f2f2f2 0 45%, #c6c6c6);
}
.miner-tab.current { background: #fff; color: #111; font-weight: 700; border-color: #fff; letter-spacing: 0; }
.panel {
  width: 1535px;
  height: 500px;
  margin-left: 32px;
  box-sizing: border-box;
  padding: 0 5px 0 6px;
  background: #fff;
  border-left: 1px solid #444;
  border-right: 1px solid #444;
  border-bottom: 1px solid #444;
  color: #222;
}
.panel-title {
  margin: 0 0 10px;
  height: 44px;
  box-sizing: border-box;
  padding-top: 17px;
  border-bottom: 1px solid #000;
  font-family: "Noto Sans", sans-serif;
  font-size: 16.5px;
  font-weight: 500;
  line-height: 20px;
  color: #000;
}
.group {
  margin: 0 0 3px;
  padding: 0 12px 5px;
  border: 1px dotted #555;
  min-width: 0;
}
.group legend {
  margin-left: 0;
  padding: 4px 3px 0;
  font-size: 12.5px;
  font-weight: 700;
  line-height: 14px;
  color: #666;
}
.tbl-wrap {
  border: 1px solid #bbb;
  border-radius: 3px;
  margin-top: 11px;
}
.fan-wrap { margin-top: 9px; }
.tbl {
  width: 1494px;
  table-layout: fixed;
  border-collapse: separate;
  border-spacing: 2px;
  font-size: 11px;
}
.tbl th {
  height: 27px;
  padding: 0 0 8px;
  box-sizing: border-box;
  color: #111;
  font-weight: 700;
  white-space: nowrap;
}
.tbl td {
  height: 14px;
  padding: 0;
  line-height: 14px;
  letter-spacing: .12px;
  text-align: center;
  background: #eeeefc;
  color: #333;
  white-space: nowrap;
  overflow: hidden;
}
.tbl td.user-cell { padding-left: 42px; }
.fan th { height: 20px; padding-bottom: 0; }
.fan-a { width: 147px; }
.fan-b { width: 663px; }
.fan-c { width: 664px; }
.fan-d { width: 10px; }
.tbl td.speed { font-weight: 700; color: #222; }
.tbl td.blank { background: transparent; }
.copyright {
  margin: 7px 0 0 16px;
  text-align: center;
  font-size: 11.8px;
  color: #f8f5fa;
  line-height: 14px;
}

.h-scroll {
  height: 17px;
  flex: none;
  display: flex;
  align-items: center;
  background: #fff;
}
.scroll-arrow { width: 17px; height: 10px; }
.scroll-thumb { flex: 1; height: 13px; background: #cbcbcb; margin-right: 8px; }
.h-scroll svg:last-child { width: 17px; }

/* панель задач внутри сессии */
.inner-task {
  height: 40px;
  flex: none;
  display: flex;
  align-items: center;
  background: #666;
  color: #f2f2f2;
  font-family: "Noto Sans", sans-serif;
  font-size: 11.4px;
}
.inner-start { width: 27px; height: 27px; margin: -2px 12px 0 11px; color: #fff; }
.inner-slot { width: 61.5px; display: flex; justify-content: center; margin-top: -2px; }
.inner-slot svg { width: 30px; height: 32px; }
.inner-running {
  width: 58px;
  height: 38px;
  margin-left: 4px;
  box-sizing: border-box;
  border: 1px solid #999;
  background: linear-gradient(#8a8a8a 50%, #777 50%);
  display: flex;
  align-items: center;
  justify-content: center;
}
.inner-running.first-run { margin-left: 5px; }
.inner-running.on { border: 1px solid #fff; background: linear-gradient(#a0a0a0 50%, #8e8e8e 50%); }
.inner-running svg { width: 30px; height: 30px; }
.inner-tray { margin-left: auto; display: flex; align-items: center; margin-right: 13px; }
.tray-slot { width: 24px; display: flex; justify-content: center; }
.tray-slot svg { width: 17px; height: 17px; }
.lang { width: 40px; margin-left: 1px; text-align: center; }
.clock {
  display: flex;
  flex-direction: column;
  align-items: center;
  width: 70px;
  line-height: 17px;
}

/* панель задач Windows */
.taskbar {
  height: 40px;
  flex: none;
  display: flex;
  align-items: center;
  background: #252525;
  color: #eee;
  font-size: 11.4px;
}
.task-btn { width: 48px; display: flex; justify-content: center; }
.start-ic { width: 18px; height: 18px; color: #fff; }
.app-btn {
  width: 49px;
  height: 40px;
  display: flex;
  align-items: center;
  justify-content: center;
  box-sizing: border-box;
}
.task-btn + .app-btn { margin-left: 3px; }
.app-btn svg { width: 24px; height: 24px; }
.app-btn.running { position: relative; }
.app-btn.running::after {
  content: "";
  position: absolute;
  left: 5px;
  right: 5px;
  bottom: 0;
  height: 2px;
  background: #aaa;
}
.tray { margin-left: auto; display: flex; align-items: center; }
.tray-pen { width: 31px; margin-left: 1px; display: flex; justify-content: center; }
.tray-kbd { width: 30px; display: flex; justify-content: center; }
.outer-lang { margin-left: 0; width: 40px; }
.outer-clock { width: 62px; }
.notify { width: 44px; margin-right: 6px; display: flex; justify-content: center; }
.show-desktop { width: 1px; height: 40px; background: #666; margin-right: 4px; }

/* окно TeamViewer */
.tv-panel {
  position: absolute;
  left: 1239px;
  top: 715px;
  width: 251px;
  height: 213px;
  display: flex;
  flex-direction: column;
  background: #474747;
  border-bottom: 1px solid #cfe5e5;
  border-left: 1px solid #cfe5e5;
  border-right: 1px solid #777;
  box-sizing: border-box;
  font-family: "Noto Sans", sans-serif;
}
.tv-side {
  position: absolute;
  left: -25px;
  top: 111px;
  width: 25px;
  height: 55px;
  background: #5b5b5b;
  clip-path: polygon(3px 0, 100% 0, 100% 100%, 80% 100%, 3px 75%, 0 70%, 0 3px);
  display: flex;
  align-items: flex-start;
  padding: 11px 0 0 10px;
  box-sizing: border-box;
}
.tv-head { height: 111px; background: #012247; flex: none; }
.tv-brand { display: flex; padding: 8px 0 0 8px; }
.tv-logo {
  width: 40px;
  height: 40px;
  background: #00386b;
  border-radius: 2px;
  display: flex;
  align-items: center;
  justify-content: center;
}
.tv-info { margin-left: 9px; width: 165px; color: #4e5966; }
.tv-name { font-size: 21.5px; line-height: 26px; padding-left: 6px; color: #5a5a5a; white-space: nowrap; }
.tv-lic { font-size: 10.5px; line-height: 13px; white-space: nowrap; }
.tv-close { width: 13px; height: 13px; margin: 15px 0 0 -1px; }
.tv-tools { display: flex; gap: 17px; padding: 20px 0 0 13px; }
.tv-tools svg { width: 17px; height: 17px; }
.tv-list { height: 75px; background: #5b5b5b; flex: none; }
.tv-list-head {
  height: 28px;
  display: flex;
  align-items: center;
  padding-left: 6px;
  font-size: 13px;
  color: #0d1620;
}
.tv-tri {
  border: 5px solid transparent;
  border-top: 7px solid #1e2a3a;
  border-bottom: 0;
  margin-right: 5px;
}
.tv-gear { width: 11px; height: 11px; margin-left: auto; margin-right: 10px; }
.tv-contact { display: flex; align-items: center; justify-content: space-between; padding: 0 10px 0 7px; margin-top: 13px; }
.tv-foot {
  height: 17px;
  flex: none;
  background: #141414;
  text-align: right;
  padding-right: 9px;
  font-size: 11.5px;
  line-height: 20px;
  color: #4b4b4b;
}
.tv-foot span { border-bottom: 1px solid #eee; }
.tv-rest { flex: 1; }
</style>
